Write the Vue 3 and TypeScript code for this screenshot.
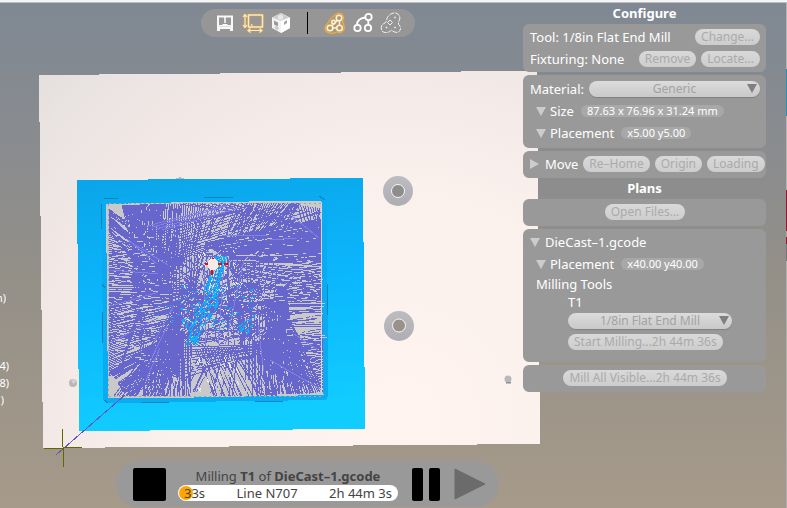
<script setup lang="ts">
import { ref } from 'vue'

type Point = [number, number]

interface Fan {
  from: [Point, Point]
  to: [Point, Point]
  count: number
  jitter: number
}

let seed = 7
function rand(): number {
  seed = (seed * 16807) % 2147483647
  return seed / 2147483647
}

function mix(a: Point, b: Point, t: number): Point {
  return [a[0] + (b[0] - a[0]) * t, a[1] + (b[1] - a[1]) * t]
}

/* Builds a bundle of straight rapid moves between two spans. */
function fanPath(fans: Fan[]): string {
  let d = ''
  for (const f of fans) {
    for (let i = 0; i < f.count; i++) {
      const t = f.count > 1 ? i / (f.count - 1) : 0.5
      const a = mix(f.from[0], f.from[1], t)
      const b = mix(f.to[0], f.to[1], Math.min(1, Math.max(0, t + (rand() - 0.5) * f.jitter)))
      d += `M${a[0].toFixed(1)} ${a[1].toFixed(1)}L${b[0].toFixed(1)} ${b[1].toFixed(1)}`
    }
  }
  return d
}

/* Scatters short strokes along an axis inside a box. */
function dashPath(x: number, y: number, w: number, h: number, count: number, dx: number, dy: number): string {
  let d = ''
  for (let i = 0; i < count; i++) {
    const px = x + rand() * w
    const py = y + rand() * h
    const k = 0.3 + rand()
    d += `M${px.toFixed(1)} ${py.toFixed(1)}l${(dx * k).toFixed(1)} ${(dy * k).toFixed(1)}`
  }
  return d
}

const moves = fanPath([
  { from: [[122, 205], [162, 204]], to: [[136, 262], [160, 300]], count: 38, jitter: 0.2 },
  { from: [[125, 205], [145, 205]], to: [[133, 290], [154, 290]], count: 18, jitter: 0.4 },
  { from: [[160, 204], [205, 203]], to: [[160, 285], [196, 250]], count: 20, jitter: 0.1 },
  { from: [[162, 204], [182, 204]], to: [[158, 250], [178, 262]], count: 12, jitter: 0.3 },
  { from: [[109, 209], [109, 232]], to: [[190, 262], [150, 280]], count: 24, jitter: 0.5 },
  { from: [[109, 234], [109, 300]], to: [[180, 262], [172, 300]], count: 34, jitter: 0.25 },
  { from: [[109, 300], [109, 376]], to: [[190, 282], [168, 350]], count: 46, jitter: 0.2 },
  { from: [[109, 250], [109, 340]], to: [[145, 250], [145, 335]], count: 34, jitter: 0.1 },
  { from: [[130, 260], [134, 340]], to: [[182, 262], [190, 338]], count: 34, jitter: 0.3 },
  { from: [[145, 228], [165, 264]], to: [[240, 205], [321, 212]], count: 17, jitter: 0.5 },
  { from: [[180, 204], [240, 203]], to: [[320, 226], [322, 236]], count: 7, jitter: 0.6 },
  { from: [[205, 204], [262, 203]], to: [[196, 240], [238, 236]], count: 16, jitter: 0.4 },
  { from: [[245, 203], [297, 203]], to: [[236, 240], [270, 232]], count: 24, jitter: 0.3 },
  { from: [[290, 203], [300, 203]], to: [[268, 235], [282, 235]], count: 10, jitter: 0.4 },
  { from: [[298, 205], [320, 208]], to: [[305, 235], [321, 225]], count: 10, jitter: 0.6 },
  { from: [[321, 219], [321, 250]], to: [[205, 243], [222, 256]], count: 30, jitter: 0.5 },
  { from: [[321, 232], [322, 262]], to: [[245, 232], [238, 262]], count: 26, jitter: 0.2 },
  { from: [[322, 250], [322, 300]], to: [[228, 250], [232, 282]], count: 32, jitter: 0.3 },
  { from: [[322, 284], [323, 348]], to: [[282, 288], [285, 350]], count: 28, jitter: 0.15 },
  { from: [[322, 270], [322, 310]], to: [[225, 288], [230, 310]], count: 17, jitter: 0.5 },
  { from: [[278, 287], [286, 290]], to: [[254, 350], [300, 392]], count: 38, jitter: 0.25 },
  { from: [[286, 310], [260, 345]], to: [[323, 392], [270, 395]], count: 44, jitter: 0.3 },
  { from: [[323, 338], [323, 388]], to: [[260, 335], [280, 372]], count: 32, jitter: 0.3 },
  { from: [[252, 340], [300, 350]], to: [[252, 395], [310, 394]], count: 32, jitter: 0.15 },
  { from: [[244, 318], [278, 300]], to: [[246, 380], [278, 380]], count: 14, jitter: 0.1 },
  { from: [[184, 300], [182, 348]], to: [[114, 396], [174, 396]], count: 44, jitter: 0.3 },
  { from: [[182, 326], [180, 372]], to: [[110, 372], [126, 396]], count: 34, jitter: 0.4 },
  { from: [[140, 345], [183, 345]], to: [[142, 396], [183, 396]], count: 24, jitter: 0.2 },
  { from: [[146, 290], [138, 320]], to: [[128, 340], [120, 370]], count: 15, jitter: 0.4 },
  { from: [[183, 300], [192, 345]], to: [[181, 395], [190, 396]], count: 7, jitter: 0.4 },
  { from: [[195, 350], [244, 345]], to: [[212, 396], [278, 396]], count: 20, jitter: 0.2 },
  { from: [[238, 350], [206, 345]], to: [[232, 396], [180, 390]], count: 12, jitter: 0.3 },
  { from: [[160, 348], [176, 380]], to: [[278, 344], [252, 357]], count: 11, jitter: 0.6 },
  { from: [[160, 300], [185, 345]], to: [[250, 270], [285, 330]], count: 24, jitter: 0.7 },
  { from: [[180, 270], [198, 318]], to: [[250, 342], [280, 300]], count: 20, jitter: 0.8 },
  { from: [[198, 252], [240, 262]], to: [[172, 334], [245, 348]], count: 24, jitter: 0.6 },
  { from: [[165, 262], [198, 252]], to: [[170, 345], [200, 345]], count: 12, jitter: 0.5 },
  { from: [[228, 260], [278, 262]], to: [[222, 340], [270, 335]], count: 12, jitter: 0.6 },
])

const weave =
  dashPath(178, 244, 90, 102, 170, 7, -5) +
  dashPath(178, 244, 90, 102, 110, 6, 4) +
  dashPath(180, 236, 90, 20, 45, 12, 1)

const gaps =
  dashPath(111, 235, 45, 130, 125, 5, 0) +
  dashPath(250, 252, 70, 50, 110, 4, 0) +
  dashPath(286, 300, 35, 40, 55, 5, 0) +
  dashPath(120, 208, 75, 60, 85, 0, 2) +
  dashPath(200, 208, 60, 30, 40, 3, -4) +
  dashPath(180, 250, 85, 95, 120, 3, -3) +
  dashPath(140, 370, 150, 24, 70, 0, 3) +
  dashPath(188, 355, 50, 38, 42, 2, 6)

const highlights = fanPath([
  { from: [[147, 226], [162, 230]], to: [[225, 205], [240, 209]], count: 4, jitter: 0.6 },
  { from: [[127, 239], [132, 243]], to: [[157, 264], [168, 265]], count: 2, jitter: 0 },
  { from: [[109, 270], [112, 342]], to: [[158, 269], [158, 318]], count: 3, jitter: 0.2 },
  { from: [[222, 236], [270, 240]], to: [[268, 235], [296, 238]], count: 2, jitter: 0 },
  { from: [[292, 216], [294, 334]], to: [[319, 238], [318, 350]], count: 2, jitter: 0 },
  { from: [[204, 270], [244, 260]], to: [[205, 345], [227, 344]], count: 3, jitter: 0.3 },
  { from: [[174, 305], [160, 348]], to: [[153, 344], [146, 380]], count: 3, jitter: 0.3 },
  { from: [[258, 325], [270, 360]], to: [[261, 370], [322, 390]], count: 2, jitter: 0.3 },
])

const sparks = dashPath(196, 250, 40, 40, 40, 1, 3) + dashPath(180, 280, 78, 60, 60, 2, 1) + dashPath(190, 355, 50, 36, 18, 2, 4)

const cuts =
  fanPath([
    { from: [[216, 256], [227, 256]], to: [[205, 290], [214, 300]], count: 8, jitter: 0.5 },
  ]) +
  dashPath(206, 285, 14, 20, 26, -3, 5) +
  dashPath(196, 300, 16, 22, 30, -3, 5) +
  dashPath(188, 320, 14, 22, 30, -3, 5) +
  dashPath(182, 285, 75, 44, 80, -3, 2) +
  dashPath(240, 322, 13, 10, 10, -4, 4) +
  dashPath(154, 285, 30, 45, 14, 2, 0)

const material = ref('Generic')
const millTool = ref('1/8in Flat End Mill')
const readouts = [
  { id: 'a', text: 'm)', cls: 'first' },
  { id: 'b', text: '4)', cls: '' },
  { id: 'c', text: '8)', cls: '' },
  { id: 'd', text: ')', cls: 'last' },
]
</script>

<template>
  <main class="app">
    <svg class="scene" viewBox="0 0 787 508" preserveAspectRatio="xMinYMin slice" aria-hidden="true">
      <defs>
        <linearGradient id="sky" x1="0" y1="0" x2="0" y2="1">
          <stop offset="0" stop-color="#7f8893" />
          <stop offset="0.38" stop-color="#8d8d8d" />
          <stop offset="0.55" stop-color="#949088" />
          <stop offset="1" stop-color="#a69a8a" />
        </linearGradient>
        <radialGradient id="bed" gradientUnits="userSpaceOnUse" cx="400" cy="420" r="520">
          <stop offset="0" stop-color="#fff4ef" />
          <stop offset="0.45" stop-color="#faf0ec" />
          <stop offset="0.75" stop-color="#f0e7e5" />
          <stop offset="1" stop-color="#e2dfdd" />
        </radialGradient>
        <linearGradient id="stock" x1="0" y1="0" x2="0.15" y2="1">
          <stop offset="0" stop-color="#0ba5e8" />
          <stop offset="0.5" stop-color="#0bb6fd" />
          <stop offset="1" stop-color="#11ccff" />
        </linearGradient>
        <linearGradient id="steel" x1="0" y1="0" x2="0" y2="1">
          <stop offset="0" stop-color="#bcbcc1" />
          <stop offset="1" stop-color="#adadb3" />
        </linearGradient>
      </defs>
      <rect width="787" height="508" fill="url(#sky)" />
      <g shape-rendering="crispEdges">
        <polygon points="39,75 523,71 537,71 540,444 43,448" fill="url(#bed)" />
        <path d="M176 179h8v-1h-3v-1h-2v1h-3z" fill="#b9b5b5" />
        <polygon points="77,180 363,178 365,429 79,431" fill="url(#stock)" />
        <path d="M105 198L324 196Q327 197 327 200L328 396Q327 400 324 400L108 403Q103 402 103 398L102 202Q102 199 105 198Z" fill="#0aabf0" />
        <path d="M104 198.500h14M204 197.500h29M101.500 204v25M102.500 312v31M102 284l3 4M104 400l4 3M141 402.500h28M255 401.500h28M327.500 284v31M319 196l6 4" stroke="#0a84bb" fill="none" />
        <polygon points="106,204 193,202 308,201 321,201 323,392 324,395 168,398 108,398" fill="#c9c9c9" />
        <path :d="moves" stroke="#6666cc" fill="none" />
        <path :d="gaps" stroke="#c9c9c9" fill="none" />
        <path :d="weave" stroke="#6666cc" fill="none" />
        <path :d="highlights" stroke="#8080e6" fill="none" />
        <path :d="sparks" stroke="#eeeeee" fill="none" />
        <path :d="cuts" stroke="#0ab4fa" fill="none" />
        <path d="M109 203.500H321M109 396.500H323M108.500 204V397" stroke="#a5a5a5" stroke-dasharray="2 3" fill="none" />
        <path d="M321.500 202V392" stroke="#d7d3dc" fill="none" />
        <path d="M218 264h4M224 264h4M212 270v5M205 264h3M213 258v2" stroke="#ff0000" stroke-width="2" fill="none" />
        <path d="M210 259h5l3 3v5l-3 3h-5l-2-3v-5z" fill="#f5ece7" />
        <path d="M125 395L56 455" stroke="#6655bb" fill="none" />
        <path d="M62.500 429v18M63.500 447v20M44 448.500h20M63 447.500h19" stroke="#666600" fill="none" />
      </g>
      <g>
        <circle cx="398" cy="191" r="15" fill="url(#steel)" />
        <circle cx="398" cy="191" r="6.500" fill="#8d8d8d" stroke="#fff4ef" />
        <circle cx="399" cy="326" r="15" fill="url(#steel)" />
        <circle cx="399" cy="325.500" r="6.500" fill="#97928a" stroke="#fff4ef" />
        <circle cx="73" cy="383" r="4" fill="#b9b7b9" />
        <path d="M71 380l4-1 1 3-3 2z" fill="#d2d0d0" />
        <circle cx="508" cy="379" r="3.500" fill="#b7b9bc" />
        <path d="M506 382h5v1.500h-5z" fill="#8e8e8e" />
      </g>
    </svg>
    <div class="topline"></div>
    <div class="rightline"></div>
    <div class="gcode-edge">
      <span v-for="line in readouts" :key="line.id" :class="['clip', line.cls]"><span>{{ line.text }}</span></span>
    </div>

    <section class="stage">
      <nav class="toolbar" aria-label="View">
        <button type="button" aria-label="Machine view">
          <svg width="24" height="24" viewBox="0 0 24 24"><path d="M4 4.500h16v15.500h-3v-2h-10v2h-3z" fill="#f8f8f8" /><path d="M6 6.500h12v9h-12z" fill="#999" /><path d="M6 14h3l1-1h4l1 1h3v1.500h-12z" fill="#f8f8f8" /><path d="M12 6v6" stroke="#fff" stroke-width="1.500" /></svg>
        </button>
        <button type="button" class="on" aria-label="Material view">
          <svg width="24" height="24" viewBox="0 0 24 24" fill="none" stroke="#ffe9bd" stroke-width="1.500"><path d="M7.500 4h14v12h-14z" /><path d="M4 4v12M2 6l2-2.500L6 6M2 14l2 2.500L6 14M7 19.500h14M9.500 17.500l-2.500 2 2.500 2M18.500 17.500l2.500 2-2.500 2" stroke-width="1.200" /><path d="M10 14h1.500" /></svg>
        </button>
        <button type="button" aria-label="Solid view">
          <svg width="24" height="24" viewBox="0 0 24 24"><path d="M3 6.500L12 2l9 4.500V17l-9 5-9-5z" fill="#f3f3f3" /><path d="M3.500 6.500L12 2l8.500 4.500L12 10z" fill="#cdcdcd" /><path d="M9 5l3-1.500 2 1V8l-2 1-3-1z" fill="#e8e8e8" /><path d="M5 9.500l4 2v4l-4-2z" fill="#9a9a9a" /><path d="M12 10v12l9-5V6.500z" fill="#fff" /><path d="M15 11l3-2v3l-3 2z" fill="#a6a6a6" /><path d="M5 16l3-1 2 2-2 2.500z" fill="#c8c8c8" /></svg>
        </button>
        <span class="divider"></span>
        <button type="button" class="on" aria-label="All moves">
          <svg width="24" height="24" viewBox="0 0 24 24" fill="none" stroke="#fff1d4" stroke-width="1.500"><circle cx="7" cy="17" r="2.800" /><circle cx="16.500" cy="17" r="2.800" /><circle cx="16" cy="7" r="2.800" /><circle cx="10.500" cy="11" r="1.800" /><path d="M9 14.500l5.500-5M16.500 10v4M10 17h4" /><path d="M2.500 20Q1 15 5 12Q7 7 12 4Q15 1 19 3Q22 6 19.500 10Q22 16 21 19Q18 23 14 21Q8 24 2.500 20Z" stroke="#f3b343" stroke-width="1" /></svg>
        </button>
        <button type="button" aria-label="Rapid moves">
          <svg width="24" height="24" viewBox="0 0 24 24" fill="none" stroke="#fff" stroke-width="1.800"><circle cx="6.500" cy="17" r="3.200" /><circle cx="17" cy="17" r="3.200" /><circle cx="17.500" cy="6" r="3.200" /><path d="M6 14Q6 7.500 14.300 6.500M17.300 9.200v4.600" /></svg>
        </button>
        <button type="button" aria-label="Cut moves">
          <svg width="24" height="24" viewBox="0 0 24 24" fill="none" stroke="#f2f2f2" stroke-width="1"><path d="M2.500 19Q1 14 6 12Q8 10 8 7Q12 1 17 2Q22 4 20.500 9Q18 13 21 15Q23 20 18 21.500Q14 21 12.500 19Q10 22 6 21.500Q3 21 2.500 19Z" stroke-dasharray="5 1" /><path d="M11 9l2.500 2.500L11 14l-2.500-2.500z" /><path d="M6.500 16.500h2M7.500 15.500v2M15 16.500h2M16 15.500v2M15 6.500h2M16 5.500v2" stroke="#ddd" /></svg>
        </button>
      </nav>

      <section class="player" aria-label="Job">
        <button type="button" class="stop" aria-label="Stop"></button>
        <div class="job">
          <p class="job-name">Milling <b>T1</b> of <b>DieCast–1.gcode</b></p>
          <div class="progress"><i class="knob"></i><span>33s</span><span>Line N707</span><span>2h 44m 3s</span></div>
        </div>
        <button type="button" class="pause" aria-label="Pause"><i></i><i></i></button>
        <button type="button" class="play" aria-label="Play"><svg width="32" height="32" viewBox="0 0 32 32"><path d="M1 1L31 16L1 31Z" fill="#6b6b6b" stroke="#6b6b6b" stroke-linejoin="round" /></svg></button>
      </section>
    </section>

    <aside class="panel">
      <h2>Configure</h2>
      <div class="card">
        <div class="row"><span class="grow">Tool: 1/8in Flat End Mill</span><button type="button" class="btn" disabled>Change...</button></div>
        <div class="row"><span class="grow">Fixturing: None</span><button type="button" class="btn" disabled>Remove</button><button type="button" class="btn" disabled>Locate...</button></div>
      </div>
      <div class="card">
        <div class="row">
          <label for="material">Material:</label>
          <span class="drop"><select id="material" v-model="material" disabled><option>Generic</option></select><svg width="10" height="9" viewBox="0 0 10 9"><path d="M0 0h10L5 9z" fill="#808080" /></svg></span>
        </div>
        <div class="row sub"><svg class="tri" width="10" height="9" viewBox="0 0 10 9"><path d="M0 0h10L5 9z" fill="#ccc" /></svg><span>Size</span><span class="tag">87.63 x 76.96 x 31.24 mm</span></div>
        <div class="row sub"><svg class="tri" width="10" height="9" viewBox="0 0 10 9"><path d="M0 0h10L5 9z" fill="#ccc" /></svg><span>Placement</span><span class="tag">x5.00 y5.00</span></div>
      </div>
      <div class="card">
        <div class="row"><svg class="tri" width="10" height="10" viewBox="0 0 10 10"><path d="M0 0v10l9-5z" fill="#ccc" /></svg><span class="grow">Move</span><button type="button" class="btn" disabled>Re–Home</button><button type="button" class="btn" disabled>Origin</button><button type="button" class="btn" disabled>Loading</button></div>
      </div>
      <h2>Plans</h2>
      <div class="card"><div class="row center"><button type="button" class="btn" disabled>Open Files...</button></div></div>
      <div class="card plan">
        <div class="row"><svg class="tri" width="10" height="9" viewBox="0 0 10 9"><path d="M0 0h10L5 9z" fill="#ccc" /></svg><span>DieCast–1.gcode</span></div>
        <div class="row sub"><svg class="tri" width="10" height="9" viewBox="0 0 10 9"><path d="M0 0h10L5 9z" fill="#ccc" /></svg><span>Placement</span><span class="tag">x40.00 y40.00</span></div>
        <div class="row short sub">Milling Tools</div>
        <div class="row short deep"><label for="mill-tool">T1</label></div>
        <div class="row mid deep">
          <span class="drop"><select id="mill-tool" v-model="millTool" disabled><option>1/8in Flat End Mill</option></select><svg width="10" height="9" viewBox="0 0 10 9"><path d="M0 0h10L5 9z" fill="#808080" /></svg></span>
        </div>
        <div class="row deep"><button type="button" class="btn" disabled>Start Milling...2h 44m 36s</button></div>
      </div>
      <div class="card"><div class="row center"><button type="button" class="btn" disabled>Mill All Visible...2h 44m 36s</button></div></div>
    </aside>
  </main>
</template>

<style>
body {
  margin: 0;
}
</style>

<style scoped>
.app {
  position: relative;
  display: grid;
  grid-template-columns: minmax(0, 1fr) 243px;
  min-height: 100vh;
  box-sizing: border-box;
  padding: 3px 21px 0 0;
  overflow: hidden;
  font-family: "Noto Sans", "Open Sans", sans-serif;
  font-size: 13px;
  line-height: 20px;
  color: #fff;
}
.scene {
  position: absolute;
  inset: 0;
  width: 100%;
  height: 100%;
}
.topline {
  position: absolute;
  inset: 0 0 auto;
  height: 2px;
  background: #f5f5f5;
  border-bottom: 1px solid #bdbdbd;
}
.rightline {
  position: absolute;
  inset: 3px 0 0 auto;
  width: 1px;
  background: linear-gradient(#b5b5b5 66px, #268fb3 66px 113px, #b5b5b5 113px 187px, #9b1237 187px 228px, #b0a5a0 228px 234px, #9b1237 234px 241px, #777 241px 258px, #b3b0ac 258px);
}
.gcode-edge {
  position: absolute;
  top: 289px;
  left: 0;
  display: flex;
  flex-direction: column;
  font-size: 11px;
  line-height: 17px;
}
.clip {
  display: flex;
  justify-content: flex-end;
  width: 9px;
  height: 17px;
  overflow: hidden;
}
.clip.first {
  width: 6px;
  margin-bottom: 51px;
}
.clip.last {
  width: 4px;
}
button {
  font: inherit;
  border: 0;
  padding: 0;
  background: none;
}
.stage {
  position: relative;
  display: flex;
  flex-direction: column;
  justify-content: space-between;
  align-items: center;
  padding: 6px 0 1px 92px;
}
.toolbar {
  display: flex;
  align-items: center;
  height: 28px;
  padding: 0 10px;
  border-radius: 14px;
  background: #969696;
}
.toolbar button {
  display: grid;
  place-items: center;
  width: 28px;
  height: 28px;
}
.on svg {
  filter: drop-shadow(0 0 1px #e0a040);
}
.divider {
  width: 1px;
  height: 22px;
  margin: 0 13px 0 12px;
  background: #000;
}
.player {
  display: flex;
  align-items: center;
  height: 46px;
  padding: 0 13px 0 17px;
  border-radius: 23px;
  background: #999;
}
.stop {
  width: 33px;
  height: 33px;
  border-radius: 2px;
  background: #000;
}
.job {
  width: 220px;
  margin: 0 14px 0 12px;
  color: #444;
}
.job-name {
  margin: 0;
  text-align: center;
  line-height: 17px;
}
.progress {
  position: relative;
  display: flex;
  justify-content: space-between;
  padding: 0 6px;
  border-radius: 8px;
  background: #fff;
  line-height: 16px;
}
.progress span {
  position: relative;
}
.knob {
  position: absolute;
  top: 1px;
  left: 1px;
  width: 14px;
  height: 14px;
  border-radius: 7px;
  background: #ffa500;
}
.pause {
  display: flex;
  gap: 6px;
}
.pause i {
  width: 11px;
  height: 33px;
  border-radius: 2px;
  background: #000;
}
.play {
  display: grid;
  margin-left: 14px;
}
.panel {
  position: relative;
  display: flex;
  flex-direction: column;
  gap: 3px;
}
h2 {
  margin: 0 0 -3px;
  text-align: center;
  font-size: 13px;
  line-height: 21px;
}
h2:not(:first-child) {
  margin-top: -3px;
}
.card {
  padding: 2px 6px 3px 7px;
  border-radius: 6px;
  background: #999;
}
.card:nth-of-type(2) {
  padding-top: 3px;
  padding-bottom: 4px;
}
.card:nth-of-type(1) {
  padding-bottom: 2px;
}
.plan {
  padding-bottom: 9px;
}
.row {
  display: flex;
  align-items: center;
  gap: 5px;
  height: 22px;
  white-space: nowrap;
}
.short {
  height: 18px;
}
.mid {
  height: 20px;
}
.center {
  justify-content: center;
}
.grow {
  flex: 1;
}
.tri {
  flex: none;
}
.sub {
  padding-left: 6px;
  gap: 4px;
}
.deep {
  padding: 0 28px 0 38px;
}
.btn {
  height: 16px;
  padding: 0 6px;
  border-radius: 8px;
  background: linear-gradient(#d9d9d9, #cdcdcd);
  color: #aaa;
  font-size: 12px;
  line-height: 16px;
}
.drop {
  position: relative;
  flex: 1;
  display: flex;
}
.drop select {
  width: 100%;
  height: 16px;
  padding: 0;
  border: 0;
  border-radius: 8px;
  appearance: none;
  background: linear-gradient(#dcdcdc, #c9c9c9);
  box-shadow: 0 1px 1px #808080;
  color: #a2a2a2;
  font: inherit;
  font-size: 12px;
  line-height: 16px;
  text-align-last: center;
  opacity: 1;
}
.drop svg {
  position: absolute;
  top: 3px;
  right: 3px;
}
.tag {
  margin-left: 3px;
  padding: 0 6px;
  border-radius: 6px;
  background: #a8a8a8;
  font-size: 11px;
  line-height: 12px;
}
</style>
